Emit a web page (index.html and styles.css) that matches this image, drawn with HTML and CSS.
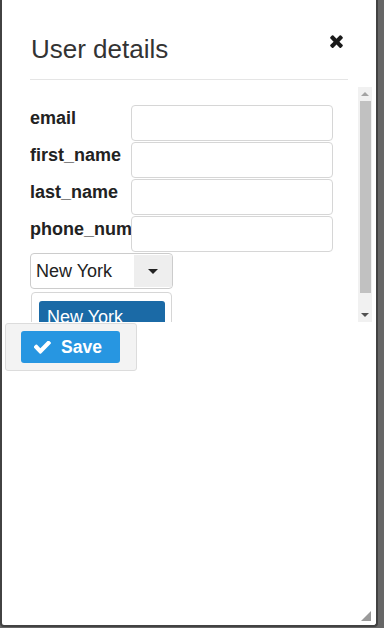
FILE: index.html
```html
<!DOCTYPE html>
<html lang="en">
<head>
    <meta charset="UTF-8">
    <meta name="viewport" content="width=device-width, initial-scale=1.0">
    <title>User details</title>
    <link rel="stylesheet" href="styles.css">
</head>
<body>
    <div class="dialog">
        <div class="dialog-header">
            <h2 class="dialog-title">User details</h2>
            <button class="dialog-close" title="Close">
                <svg viewBox="300 336 1192 1220" width="13" height="13">
                    <path fill="#1a1a1a" d="M1490 1322q0 40-28 68l-136 136q-28 28-68 28t-68-28l-294-294-294 294q-28 28-68 28t-68-28l-136-136q-28-28-28-68t28-68l294-294-294-294q-28-28-28-68t28-68l136-136q28-28 68-28t68 28l294 294 294-294q28-28 68-28t68 28l136 136q28 28 28 68t-28 68l-294 294 294 294q28 28 28 68z"/>
                </svg>
            </button>
        </div>

        <div class="dialog-content">
            <form class="form-body">
                <div class="form-row">
                    <label for="email">email</label>
                    <input type="text" id="email" name="email">
                </div>
                <div class="form-row">
                    <label for="first_name">first_name</label>
                    <input type="text" id="first_name" name="first_name">
                </div>
                <div class="form-row">
                    <label for="last_name">last_name</label>
                    <input type="text" id="last_name" name="last_name">
                </div>
                <div class="form-row">
                    <label for="phone_number">phone_number</label>
                    <input type="text" id="phone_number" name="phone_number">
                </div>

                <div class="select-box">
                    <span class="select-value">New York</span>
                    <span class="select-arrow"><span class="caret"></span></span>
                </div>
                <div class="select-menu">
                    <div class="select-option active">New York</div>
                    <div class="select-option">Boston</div>
                </div>
            </form>

            <div class="scrollbar">
                <div class="scroll-btn"><span class="tri-up"></span></div>
                <div class="scroll-track"><div class="scroll-thumb"></div></div>
                <div class="scroll-btn"><span class="tri-down"></span></div>
            </div>
        </div>

        <div class="buttonpane">
            <button class="btn-save" type="button">
                <svg viewBox="140 400 1535 1125" width="17" height="13">
                    <path fill="#ffffff" d="M1671 566q0 40-28 68l-724 724-136 136q-28 28-68 28t-68-28l-136-136-362-362q-28-28-28-68t28-68l136-136q28-28 68-28t68 28l294 295 656-657q28-28 68-28t68 28l136 136q28 28 28 68z"/>
                </svg>
                <span>Save</span>
            </button>
        </div>

        <div class="resize-handle">
            <svg viewBox="0 0 11 11" width="11" height="11">
                <polygon points="10,0 10,10 0,10" fill="#9a9a9a"/>
            </svg>
        </div>
    </div>
</body>
</html>
```

FILE: styles.css
```css
body {
    margin: 0;
    height: 628px;
    overflow: hidden;
    background: #666666;
    font-family: "Liberation Sans", Arial, sans-serif;
    color: #333333;
}

.dialog {
    position: relative;
    width: 374px;
    height: 625px;
    background: #ffffff;
    border: 2px solid #424242;
    border-top: none;
    border-radius: 0 0 4px 4px;
}

.dialog-header {
    display: flex;
    justify-content: space-between;
    align-items: flex-start;
    margin: 0 28px;
    padding: 34px 0 15px 0;
    border-bottom: 1px solid #e5e5e5;
}

.dialog-title {
    margin: 0 0 0 1px;
    font-size: 26px;
    line-height: 30px;
    font-weight: normal;
    color: #333333;
}

.dialog-close {
    margin: 1px 5px 0 0;
    padding: 0;
    border: none;
    background: none;
    width: 13px;
    height: 13px;
    line-height: 0;
    cursor: pointer;
}

.dialog-content {
    display: flex;
    margin: 7px 0 0 28px;
    width: 342px;
    height: 235px;
}

.form-body {
    flex: 1;
    margin: 0;
    padding-top: 18px;
    overflow: hidden;
}

.form-row {
    display: flex;
    height: 36px;
    margin-bottom: 1px;
}

.form-row label {
    flex: none;
    width: 101px;
    padding-top: 3px;
    font-size: 18px;
    line-height: 20px;
    font-weight: bold;
    color: #222222;
    white-space: nowrap;
    overflow: hidden;
}

.form-row input {
    width: 202px;
    height: 36px;
    box-sizing: border-box;
    border: 1px solid #d6d6d6;
    border-radius: 4px;
    padding: 6px 10px;
    font-size: 16px;
    background: #ffffff;
}

.select-box {
    display: flex;
    width: 143px;
    height: 36px;
    box-sizing: border-box;
    border: 1px solid #cccccc;
    border-radius: 4px;
    overflow: hidden;
}

.select-value {
    flex: 1;
    padding-left: 5px;
    font-size: 18px;
    line-height: 34px;
    color: #222222;
}

.select-arrow {
    display: flex;
    align-items: center;
    justify-content: center;
    width: 38px;
    margin: 1px 0;
    background: #eeeeee;
}

.caret {
    width: 0;
    height: 0;
    border-left: 5px solid transparent;
    border-right: 5px solid transparent;
    border-top: 5px solid #222222;
}

.select-menu {
    width: 141px;
    box-sizing: border-box;
    margin: 3px 0 0 1px;
    padding: 8px 6px 8px 7px;
    border: 1px solid #d6d6d6;
    border-radius: 4px;
    background: #ffffff;
}

.select-option {
    padding: 6px 8px;
    font-size: 18px;
    line-height: 20px;
    color: #333333;
    border-radius: 3px;
}

.select-option.active {
    background: #1b6aa6;
    color: #ffffff;
}

.scrollbar {
    display: flex;
    flex-direction: column;
    width: 14px;
    background: #f1f1f1;
}

.scroll-btn {
    display: flex;
    align-items: center;
    justify-content: center;
    height: 14px;
}

.tri-up {
    border-left: 4px solid transparent;
    border-right: 4px solid transparent;
    border-bottom: 4px solid #a3a3a3;
}

.tri-down {
    border-left: 4px solid transparent;
    border-right: 4px solid transparent;
    border-top: 4px solid #505050;
}

.scroll-track {
    flex: 1;
}

.scroll-thumb {
    height: 192px;
    margin: 0 1px 0 2px;
    background: #c1c1c1;
}

.buttonpane {
    width: 132px;
    height: 48px;
    box-sizing: border-box;
    margin: 1px 0 0 3px;
    padding: 7px 0 0 15px;
    background: #f3f3f3;
    border: 1px solid #dcdcdc;
    border-radius: 3px;
}

.btn-save {
    display: flex;
    align-items: center;
    gap: 10px;
    width: 99px;
    height: 32px;
    padding: 0 0 0 13px;
    border: none;
    border-radius: 3px;
    background: #2796e1;
    color: #ffffff;
    font-family: "Liberation Sans", Arial, sans-serif;
    font-size: 17.5px;
    font-weight: bold;
    cursor: pointer;
}

.resize-handle {
    position: absolute;
    right: 4px;
    bottom: 3px;
    line-height: 0;
}
```
